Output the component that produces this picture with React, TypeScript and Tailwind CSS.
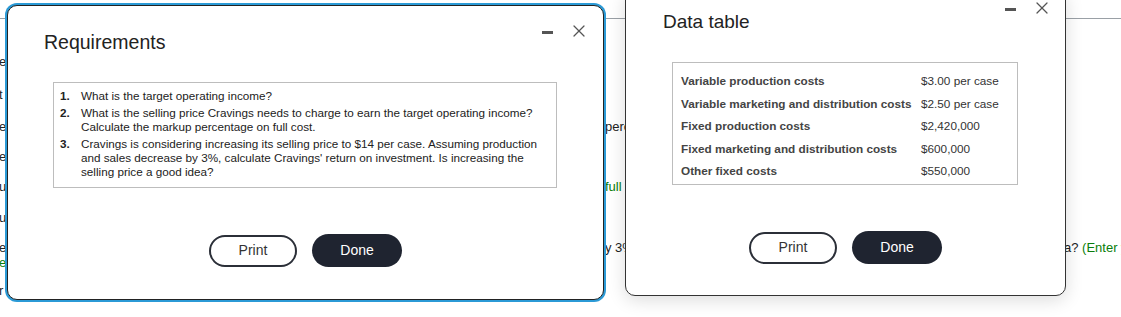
import { X } from "lucide-react";

const requirements = [
  ["What is the target operating income?"],
  [
    "What is the selling price Cravings needs to charge to earn the target operating income?",
    "Calculate the markup percentage on full cost.",
  ],
  [
    "Cravings is considering increasing its selling price to $14 per case. Assuming production",
    "and sales decrease by 3%, calculate Cravings' return on investment. Is increasing the",
    "selling price a good idea?",
  ],
];

const dataRows = [
  ["Variable production costs", "$3.00 per case"],
  ["Variable marketing and distribution costs", "$2.50 per case"],
  ["Fixed production costs", "$2,420,000"],
  ["Fixed marketing and distribution costs", "$600,000"],
  ["Other fixed costs", "$550,000"],
];

function WindowControls() {
  return (
    <div className="flex items-center gap-[16px] text-[#555]">
      <span className="block w-[11px] h-[3px] bg-[#555] mt-[2px]" />
      <X size={20} strokeWidth={1.5} />
    </div>
  );
}

function Buttons() {
  return (
    <div className="flex items-center justify-center gap-[15px]">
      <button className="w-[88px] h-[32px] rounded-full border-2 border-[#2b2f38] bg-white text-[14px] text-[#333]">
        Print
      </button>
      <button className="w-[90px] h-[33px] rounded-full bg-[#1f2430] text-[14px] text-white">
        Done
      </button>
    </div>
  );
}

export default function App() {
  return (
    <div className="relative w-[1121px] h-[317px] overflow-hidden bg-white text-[#222] font-['Liberation_Sans',Arial,sans-serif]">
      {/* Page behind the dialogs */}
      <div className="flex flex-col text-[13px] leading-[15px] text-[#222]">
        <div className="h-[19px] border-b border-[#9aa0a6]" />
        <div className="mt-[35px] h-[15px] flex"><span className="-ml-[1px]">e</span></div>
        <div className="mt-[18px] h-[15px] flex"><span className="-ml-[1px]">t</span></div>
        <div className="mt-[17px] h-[15px] flex">
          <span className="w-[606px] shrink-0 -ml-[1px]">e</span>
          <span>perc</span>
        </div>
        <div className="mt-[15px] h-[15px] flex"><span className="-ml-[1px]">e</span></div>
        <div className="mt-[15px] h-[15px] flex">
          <span className="w-[606px] shrink-0 -ml-[1px]">ul</span>
          <span className="text-[#0a7d0a] whitespace-nowrap">full c</span>
        </div>
        <div className="mt-[16px] h-[15px] flex"><span className="-ml-[1px]">u</span></div>
        <div className="mt-[15px] h-[15px] flex">
          <span className="w-[606px] shrink-0 -ml-[1px]">e</span>
          <span className="w-[459px] shrink-0">y 3%</span>
          <span className="whitespace-nowrap">a? <span className="text-[#0a7d0a]">(Enter yo</span></span>
        </div>
        <div className="h-[15px] flex"><span className="-ml-[1px] text-[#0a7d0a]">e</span></div>
        <div className="mt-[13px] h-[15px] flex"><span className="-ml-[1px]">r</span></div>
      </div>

      {/* Requirements dialog */}
      <div className="absolute left-[7px] top-[5px] w-[597px] h-[295px] rounded-[10px] border border-[#222] bg-white shadow-[0_0_0_2px_#2b9ad6] flex flex-col">
        <div className="flex items-start justify-between pl-[36px] pr-[14px] pt-[24px]">
          <h2 className="text-[19.5px] leading-[24px] text-[#222]">Requirements</h2>
          <div className="-mt-[9px]">
            <WindowControls />
          </div>
        </div>
        <ol className="mt-[28px] ml-[45px] w-[504px] h-[106px] border border-[#bdbdbd] pl-[6px] pt-[6px] flex flex-col gap-[3px] text-[11.7px] leading-[14px] text-[#222]">
          {requirements.map((lines, i) => (
            <li key={i} className="flex">
              <span className="w-[21px] shrink-0 font-bold">{i + 1}.</span>
              <span className="flex flex-col">
                {lines.map((l) => (
                  <span key={l}>{l}</span>
                ))}
              </span>
            </li>
          ))}
        </ol>
        <div className="mt-[46px]">
          <Buttons />
        </div>
      </div>

      {/* Data table dialog */}
      <div className="absolute left-[625px] -top-[10px] w-[441px] h-[306px] rounded-[10px] border border-[#333] bg-white shadow-[0_4px_18px_rgba(0,0,0,0.14)] flex flex-col">
        <div className="flex items-start justify-between pl-[37px] pr-[13px] pt-[20px]">
          <h2 className="text-[19px] leading-[22px] text-[#222]">Data table</h2>
          <div className="-mt-[13px]">
            <WindowControls />
          </div>
        </div>
        <div className="mt-[29px] ml-[46px] w-[346px] h-[123px] border border-[#bdbdbd] pl-[8px] pt-[7px] text-[11.75px]">
          {dataRows.map(([label, value]) => (
            <div key={label} className="flex h-[22.5px] items-center">
              <span className="w-[240px] shrink-0 font-bold text-[#444]">{label}</span>
              <span className="text-[#333]">{value}</span>
            </div>
          ))}
        </div>
        <div className="mt-[46px]">
          <Buttons />
        </div>
      </div>
    </div>
  );
}
